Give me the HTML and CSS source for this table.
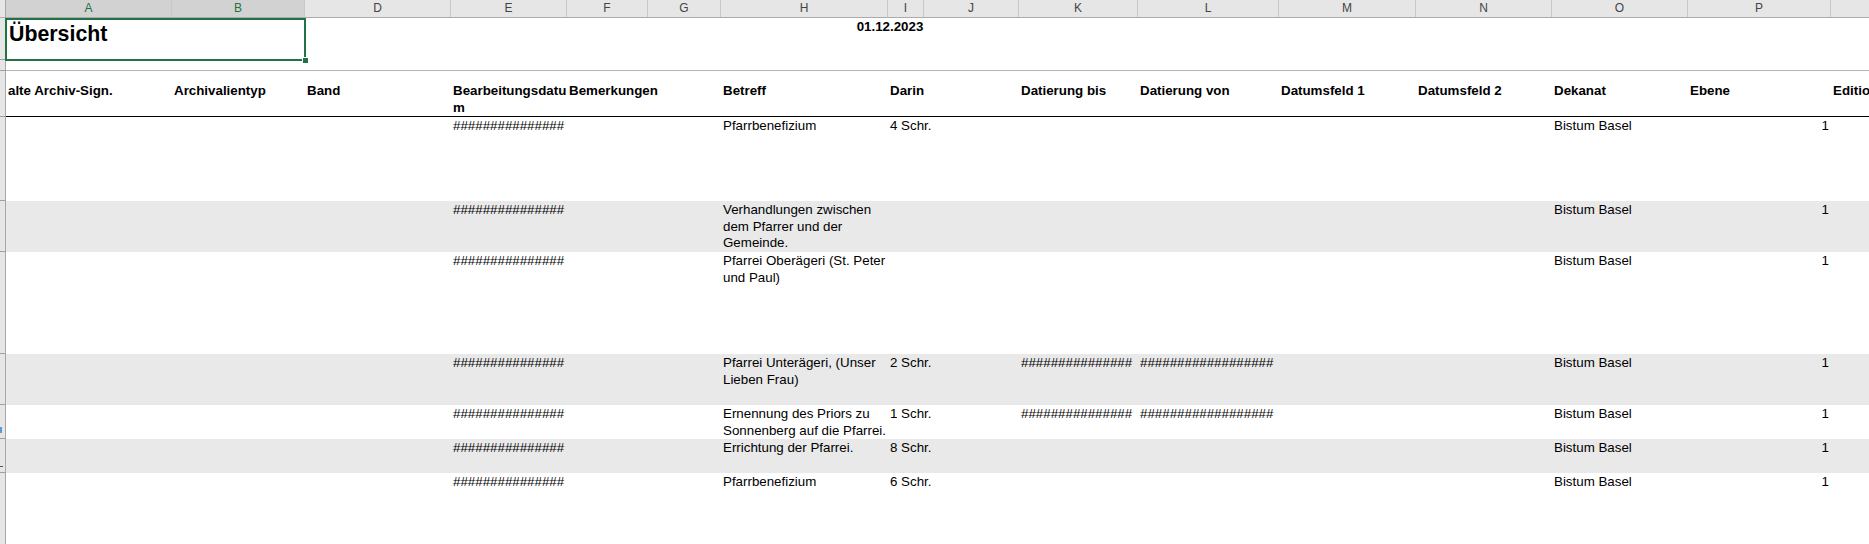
FILE: index.html
```html
<!DOCTYPE html>
<html lang="de">
<head>
<meta charset="utf-8">
<title>Übersicht</title>
<link rel="stylesheet" href="styles.css">
</head>
<body>
<div class="sheet">
  <div class="row colheads">
    <div class="corner"></div>
    <div class="ch sel">A</div>
    <div class="ch sel">B</div>
    <div class="ch">D</div>
    <div class="ch">E</div>
    <div class="ch">F</div>
    <div class="ch">G</div>
    <div class="ch">H</div>
    <div class="ch">I</div>
    <div class="ch">J</div>
    <div class="ch">K</div>
    <div class="ch">L</div>
    <div class="ch">M</div>
    <div class="ch">N</div>
    <div class="ch">O</div>
    <div class="ch">P</div>
    <div class="ch"></div>
  </div>

  <div class="row r-title">
    <div class="rh"></div>
    <div class="cell title">Übersicht<span class="handle"></span></div>
    <div class="cell date">01.12.2023</div>
  </div>

  <div class="row r-gap">
    <div class="rh"></div>
  </div>

  <div class="row r-head">
    <div class="rh"></div>
    <div class="cell cA">alte Archiv-Sign.</div>
    <div class="cell cB">Archivalientyp</div>
    <div class="cell cD">Band</div>
    <div class="cell cE">Bearbeitungsdatu<br>m</div>
    <div class="cell cF">Bemerkungen</div>
    <div class="cell cH">Betreff</div>
    <div class="cell cI">Darin</div>
    <div class="cell cK">Datierung bis</div>
    <div class="cell cL">Datierung von</div>
    <div class="cell cM">Datumsfeld 1</div>
    <div class="cell cN">Datumsfeld 2</div>
    <div class="cell cO">Dekanat</div>
    <div class="cell cP">Ebene</div>
    <div class="cell cQ">Edition</div>
  </div>

  <div class="row data h84">
    <div class="rh"></div>
    <div class="cell cE">###############</div>
    <div class="cell cH wrap">Pfarrbenefizium</div>
    <div class="cell cI">4 Schr.</div>
    <div class="cell cO">Bistum Basel</div>
    <div class="cell cP num">1</div>
  </div>

  <div class="row data alt h51">
    <div class="rh"></div>
    <div class="cell cE">###############</div>
    <div class="cell cH wrap">Verhandlungen zwischen dem Pfarrer und der Gemeinde.</div>
    <div class="cell cO">Bistum Basel</div>
    <div class="cell cP num">1</div>
  </div>

  <div class="row data h102">
    <div class="rh"></div>
    <div class="cell cE">###############</div>
    <div class="cell cH wrap">Pfarrei Oberägeri (St. Peter und Paul)</div>
    <div class="cell cO">Bistum Basel</div>
    <div class="cell cP num">1</div>
  </div>

  <div class="row data alt h51">
    <div class="rh"></div>
    <div class="cell cE">###############</div>
    <div class="cell cH wrap">Pfarrei Unterägeri, (Unser Lieben Frau)</div>
    <div class="cell cI">2 Schr.</div>
    <div class="cell cK">###############</div>
    <div class="cell cL">##################</div>
    <div class="cell cO">Bistum Basel</div>
    <div class="cell cP num">1</div>
  </div>

  <div class="row data h34">
    <div class="rh"><div class="rh-mark blue"></div></div>
    <div class="cell cE">###############</div>
    <div class="cell cH wrap">Ernennung des Priors zu Sonnenberg auf die Pfarrei.</div>
    <div class="cell cI">1 Schr.</div>
    <div class="cell cK">###############</div>
    <div class="cell cL">##################</div>
    <div class="cell cO">Bistum Basel</div>
    <div class="cell cP num">1</div>
  </div>

  <div class="row data alt h34">
    <div class="rh"><div class="rh-mark dash"></div></div>
    <div class="cell cE">###############</div>
    <div class="cell cH wrap">Errichtung der Pfarrei.</div>
    <div class="cell cI">8 Schr.</div>
    <div class="cell cO">Bistum Basel</div>
    <div class="cell cP num">1</div>
  </div>

  <div class="row data h84">
    <div class="rh"></div>
    <div class="cell cE">###############</div>
    <div class="cell cH wrap">Pfarrbenefizium</div>
    <div class="cell cI">6 Schr.</div>
    <div class="cell cO">Bistum Basel</div>
    <div class="cell cP num">1</div>
  </div>
</div>
</body>
</html>
```

FILE: styles.css
```css
:root {
  --cols: 6px 166px 133px 146px 116px 81px 73px 167px 36px 95px 119px 141px 137px 136px 136px 143px 140px;
  --green: #217346;
  --band: #e9e9e9;
}

html, body {
  margin: 0;
  padding: 0;
  background: #ffffff;
  overflow: hidden;
}

body {
  width: 1869px;
  height: 544px;
  font-family: "Liberation Sans", Arial, sans-serif;
  font-size: 13.33px;
  color: #000000;
}

.sheet {
  width: 1971px;
}

.row {
  display: grid;
  grid-template-columns: var(--cols);
  box-sizing: border-box;
}

/* column header bar */
.colheads {
  height: 18px;
  background: #e6e6e6;
  border-bottom: 1px solid #ababab;
}

.corner {
  background: #e6e6e6;
  border-right: 1px solid #a8a8a8;
}

.ch {
  border-right: 1px solid #c8c8c8;
  text-align: center;
  font-size: 12px;
  line-height: 17px;
  color: #444444;
}

.ch.sel {
  background: #d2d2d2;
  color: var(--green);
}

/* row header strip */
.rh {
  grid-row: 1;
  grid-column: 1;
  background: #e6e6e6;
  border-right: 1px solid #a8a8a8;
  border-bottom: 1px solid #a0a0a0;
  box-sizing: border-box;
}

.rh-mark {
  width: 2px;
  height: 6px;
}

.rh-mark.blue {
  margin-top: 22px;
  background: #5b9bd5;
}

.rh-mark.dash {
  margin-top: 27px;
  height: 1px;
  width: 3px;
  background: #555555;
}

/* cells */
.cell {
  grid-row: 1;
  padding: 1px 0 0 2px;
  line-height: 16.5px;
  white-space: nowrap;
  min-width: 0;
}

.cell.wrap {
  white-space: normal;
}

.cell.num {
  text-align: right;
  padding-right: 2px;
}

.cA { grid-column: 2; }
.cB { grid-column: 3; }
.cD { grid-column: 4; }
.cE { grid-column: 5; }
.cF { grid-column: 6; }
.cG { grid-column: 7; }
.cH { grid-column: 8; }
.cI { grid-column: 9; }
.cJ { grid-column: 10; }
.cK { grid-column: 11; }
.cL { grid-column: 12; }
.cM { grid-column: 13; }
.cN { grid-column: 14; }
.cO { grid-column: 15; }
.cP { grid-column: 16; }
.cQ { grid-column: 17; }

/* title row */
.r-title {
  height: 42px;
}

.title {
  grid-column: 2 / 4;
  position: relative;
  padding: 4px 0 0 3px;
  font-size: 21.33px;
  font-weight: bold;
  line-height: 24px;
}

.title::after {
  content: "";
  position: absolute;
  left: -1px;
  right: -1px;
  top: 0;
  bottom: -1px;
  border: 2px solid var(--green);
}

.handle {
  position: absolute;
  right: -4px;
  bottom: -4px;
  width: 5px;
  height: 5px;
  background: var(--green);
  border: 1px solid #ffffff;
  z-index: 2;
}

.date {
  grid-column: 7 / 12;
  text-align: center;
  padding-right: 8px;
  font-weight: bold;
}

/* spacer row with grey rule */
.r-gap {
  height: 11px;
  background: linear-gradient(#b4b4b4, #b4b4b4) 6px 100% / calc(100% - 6px) 1px no-repeat;
}

/* header row */
.r-head {
  height: 46px;
  background: linear-gradient(#000000, #000000) 6px 100% / calc(100% - 6px) 1px no-repeat;
}

.r-head .cell {
  padding-top: 12px;
  font-weight: bold;
}

/* data rows */
.data.alt {
  background: linear-gradient(var(--band), var(--band)) 6px 0 / calc(100% - 6px) 100% no-repeat;
}

.h34 { height: 34px; }
.h51 { height: 51px; }
.h84 { height: 84px; }
.h102 { height: 102px; }
```
